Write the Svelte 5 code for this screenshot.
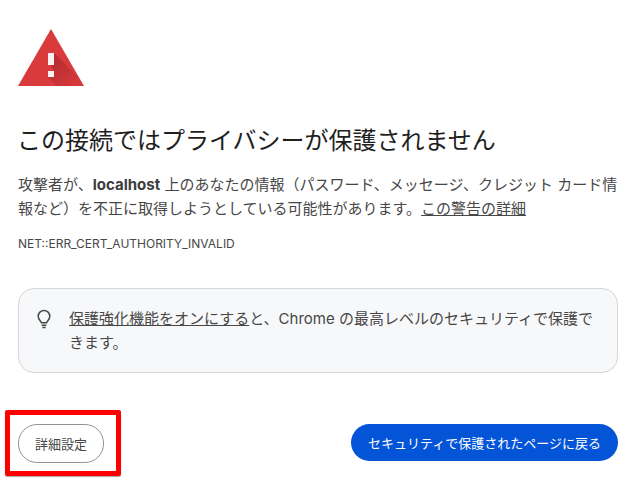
<script>
  const title = "この接続ではプライバシーが保護されません";
</script>

<main class="page">
  <svg class="warn" width="66" height="57" viewBox="0 0 66 57" aria-hidden="true">
    <defs>
      <linearGradient id="fade" x1="0.2" y1="0.2" x2="0.9" y2="0.9">
        <stop offset="0" stop-color="#8c1c1f" stop-opacity="0.45" />
        <stop offset="1" stop-color="#8c1c1f" stop-opacity="0.02" />
      </linearGradient>
    </defs>
    <path d="M33 0 L66 57 H0 Z" fill="#d93a3c" />
    <path d="M36 24 L62 50 L66 57 H39 L30 48 H36 V42 L33 36 H36 Z" fill="url(#fade)" />
    <rect x="30" y="24" width="6" height="12" fill="#fbf0f0" />
    <rect x="30" y="42" width="6" height="6" fill="#fbf0f0" />
  </svg>

  <h1>{title}</h1>

  <p class="desc">攻撃者が、<b>localhost</b> 上のあなたの情報（パスワード、メッセージ、クレジット カード情報など）を不正に取得しようとしている可能性があります。<u>この警告の詳細</u></p>

  <p class="code">NET::ERR_CERT_AUTHORITY_INVALID</p>

  <div class="notice">
    <svg width="24" height="24" viewBox="0 0 24 24" fill="none" stroke="#474747" stroke-width="1.5" aria-hidden="true">
      <path d="M9.5 15.8 C9.2 14 6.2 13 6.2 9.2 A5.8 5.8 0 0 1 17.8 9.2 C17.8 13 14.8 14 14.5 15.8 Z" />
      <path d="M9.6 18.2 H14.4 M10.4 20.4 H13.6" />
    </svg>
    <p><u>保護強化機能をオンにする</u>と、Chrome の最高レベルのセキュリティで保護できます。</p>
  </div>

  <div class="actions">
    <button class="ghost">詳細設定</button>
    <button class="primary">セキュリティで保護されたページに戻る</button>
  </div>

  <div class="mark"></div>
</main>

<style>
  :global(body) {
    margin: 0;
    background: #fff;
  }

  .page {
    position: relative;
    box-sizing: border-box;
    width: 635px;
    height: 495px;
    padding: 29px 17px 0 18px;
    font-family: Inter, "Noto Sans CJK JP", sans-serif;
    color: #1f1f1f;
  }

  .warn {
    display: block;
  }

  h1 {
    margin: 40px 0 0 -1px;
    font-size: 24px;
    font-weight: 400;
    line-height: 30px;
  }

  .desc {
    margin: 17px 0 0;
    font-size: 15px;
    line-height: 24px;
    color: #474747;
  }

  .desc b {
    color: #3c3c3c;
  }

  .code {
    margin: 15px 0 0;
    font-size: 12px;
    line-height: 16px;
    color: #474747;
  }

  .notice {
    display: flex;
    gap: 9px;
    box-sizing: border-box;
    height: 85px;
    margin-top: 36px;
    padding: 18px 14px 18px 13px;
    border: 1px solid #d6d6d6;
    border-radius: 16px;
    background: #f7f8f9;
  }

  .notice svg {
    flex: none;
  }

  .notice p {
    margin: 0 0 0 4px;
    font-size: 15px;
    line-height: 24px;
    color: #474747;
  }

  .actions {
    display: flex;
    justify-content: space-between;
    align-items: flex-start;
    margin-top: 51px;
  }

  button {
    padding: 0;
    border-radius: 19px;
    font-family: inherit;
    font-size: 13px;
  }

  .ghost {
    width: 86px;
    height: 39px;
    border: 1px solid #8f949a;
    background: #fff;
    color: #474747;
  }

  .primary {
    width: 267px;
    height: 37px;
    border: none;
    background: #0454d8;
    color: #fff;
    font-weight: 400;
  }

  .mark {
    position: absolute;
    left: 5px;
    top: 410px;
    width: 116px;
    height: 66px;
    box-sizing: border-box;
    border: 5px solid #ff0000;
    border-radius: 2px;
    box-shadow: 0 1px 1px rgba(0, 0, 0, 0.35);
    pointer-events: none;
  }
</style>
